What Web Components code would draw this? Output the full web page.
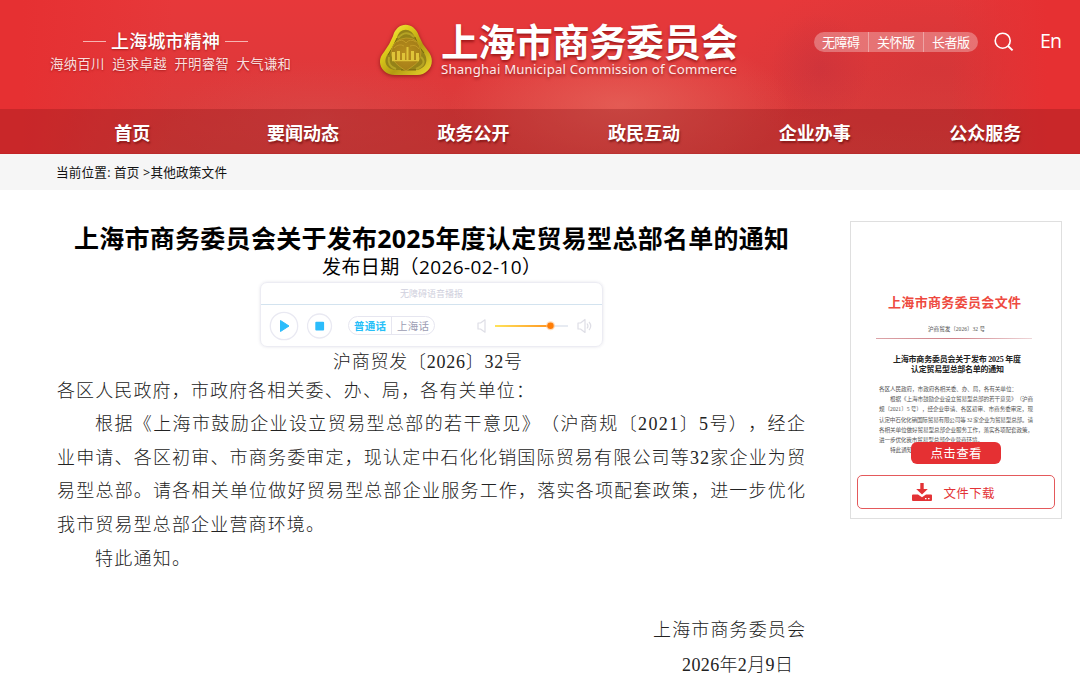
<!DOCTYPE html>
<html lang="zh-CN">
<head>
<meta charset="utf-8">
<title>上海市商务委员会</title>
<style>
html,body{margin:0;padding:0;background:#fff}
body{width:1080px;height:685px;overflow:hidden;font-family:"Open Sans","Noto Sans CJK SC",sans-serif;color:#000;text-spacing-trim:space-all}
</style>
</head>
<body>
<gov-page></gov-page>
<script>
const define=(name,html,setup)=>customElements.define(name,class extends HTMLElement{
  constructor(){super();this.attachShadow({mode:'open'}).innerHTML=html;}
  connectedCallback(){if(setup)setup(this);}
});

/* One line of text, spaced evenly to fill the width given in "w". */
define('fit-text',`<style>:host{display:block;white-space:pre;flex:none}span{display:inline-block;vertical-align:top}</style><span><slot></slot></span>`,el=>{
  const w=+el.getAttribute('w');
  const s=el.shadowRoot.querySelector('span');
  el.style.width=w+'px';
  s.style.letterSpacing='0px';
  const gap=(w-s.getBoundingClientRect().width)/(Array.from(el.textContent).length-1);
  s.style.letterSpacing=gap+'px';
  s.style.marginRight=-gap+'px';
});

define('city-spirit',`<style>
:host{display:block;width:242px;color:#fff;text-shadow:0 1px 2px rgba(110,0,0,.5)}
.t{display:flex;align-items:center;gap:5px;margin-left:33px;font-size:18px;line-height:24px;font-weight:500}
.t i{width:23px;height:1px;background:#f7b5b2;margin-top:1px}
.b{font-size:13.4px;line-height:22px;color:#fbdedd}
</style><div class="t"><i></i><fit-text w="109">上海城市精神</fit-text><i></i></div>
<fit-text class="b" w="241">海纳百川  追求卓越  开明睿智  大气谦和</fit-text>`);

define('site-logo',`<style>
:host{display:flex;gap:8px;align-items:flex-start;color:#fff}
svg{margin-top:1px;filter:drop-shadow(0 1px 2px rgba(90,10,0,.6))}
.n{text-shadow:0 2px 3px rgba(110,0,0,.6)}
.c{font-size:37.5px;line-height:38px;height:39px;font-weight:700}
.e{font-size:13.2px;line-height:14px;color:#fdeaea;font-family:"Noto Sans",sans-serif}
</style>
<svg width="54" height="53" viewBox="0 0 54 53">
<defs><linearGradient id="g" x1="0" y1="0" x2="1" y2="1"><stop offset="0" stop-color="#fff36a"/><stop offset=".3" stop-color="#e0cf1c"/><stop offset=".6" stop-color="#b39a12"/><stop offset="1" stop-color="#eddb2f"/></linearGradient>
<radialGradient id="h"><stop offset="0" stop-color="#b98d1e"/><stop offset="1" stop-color="#a57f18"/></radialGradient></defs>
<path d="M14 12C18-3 35-3 40 12Q43 20 49 27C58 38 50 51 38 51H16C3 51-4 38 5 28Q11 20 14 12Z" fill="url(#g)"/>
<path d="M18 14C20 3 33 3 36 14Q39 22 45 29C51 38 45 46 36 46H18C8 46 3 38 9 30Q15 22 18 14Z" fill="#958218"/>
<path d="M36 13Q38 22 45 29M37 46H22M9 31Q14 24 18 14" fill="none" stroke="#6c590b" stroke-width=".8"/>
<path d="M19 14Q27 5 35 13M10 33Q8 42 17 45M42 33Q49 40 37 45" fill="none" stroke="#b5a324" stroke-width="2"/>
<path d="M12 28Q14 15 27 14T42 28Q42 37 34 42L27 47L20 42Q13 37 12 28Z" fill="url(#h)" stroke="#c2a126" stroke-width=".8"/>
<path d="M18 18Q23 14 27 19Q31 14 37 18M15 24Q20 19 25 22M31 22Q37 20 40 25" fill="none" stroke="#c7a02b" stroke-width=".8"/>
<path d="M13 28h3v8h-3zM18 27h3v9h-3zM23 29h3v7h-3zM27.500 23h2v13h-2zM32 27h3v9h-3zM37 29h3v7h-3zM13 36h27v1.200H13z" fill="#dfc338"/>
</svg>
<div class="n"><fit-text class="c" w="297">上海市商务委员会</fit-text><fit-text class="e" w="296">Shanghai Municipal Commission of Commerce</fit-text></div>`);

define('header-tools',`<style>
:host{display:flex;align-items:center;color:#fff}
.p{display:flex;width:164px;height:20px;border-radius:10px;background:rgba(255,255,255,.3);overflow:hidden}
.p div{flex:1;display:flex;align-items:center;justify-content:center;font-size:13px;line-height:20px}
.p div+div{border-left:1px solid rgba(255,255,255,.35)}
svg{margin-left:16px}
.en{font-size:19.5px;line-height:28px;margin:-3px 0 0 26px}
</style><div class="p"><div><fit-text w="38">无障碍</fit-text></div><div><fit-text w="38">关怀版</fit-text></div><div><fit-text w="38">长者版</fit-text></div></div>
<svg width="20" height="20" viewBox="0 0 20 20" fill="none" stroke="#fff" stroke-width="1.6"><circle cx="8.7" cy="8.7" r="7.5"/><path d="M14 14l4.6 4.4" stroke-width="2"/></svg>
<fit-text class="en" w="22">En</fit-text>`);

define('main-nav',`<style>
:host{display:grid;grid-template-columns:repeat(6,170.6px);padding-left:47px;height:44px;background:rgba(130,16,20,.29);border-bottom:1px solid rgba(160,20,24,.15);color:#fff;font-size:18px;font-weight:700;text-shadow:1px 2px 2px rgba(80,0,0,.5)}
a{display:flex;align-items:center;justify-content:center;line-height:26px;padding-top:3px;box-sizing:border-box}
</style><a><fit-text w="36">首页</fit-text></a><a><fit-text w="72">要闻动态</fit-text></a><a><fit-text w="72">政务公开</fit-text></a><a><fit-text w="72">政民互动</fit-text></a><a><fit-text w="72">企业办事</fit-text></a><a><fit-text w="72">公众服务</fit-text></a>`);

define('site-header',`<style>
:host{display:block;height:154px;background:
linear-gradient(90deg,#e63032 2%,rgba(230,48,50,0) 16%,rgba(230,48,50,0) 88%,#e63032 97%),
radial-gradient(ellipse 50px 55px at 820px 68px,rgba(180,45,62,.3),rgba(180,45,62,0)),
radial-gradient(ellipse 170px 75px at 620px 105px,rgba(236,122,108,.5),rgba(236,122,108,0)),
radial-gradient(ellipse 150px 60px at 320px 118px,rgba(215,90,90,.28),rgba(215,90,90,0)),
radial-gradient(ellipse 200px 110px at 940px 70px,rgba(200,52,54,.45),rgba(200,52,54,0)),
linear-gradient(#e7383a,#e0383a 45%,#d6403d)}
.top{display:flex;height:109px;box-sizing:border-box}
city-spirit{margin:29px 0 0 50px}site-logo{margin:23px 0 0 87px}header-tools{margin:28px 0 0 76px;height:28px}
</style><div class="top"><city-spirit></city-spirit><site-logo></site-logo><header-tools></header-tools></div><main-nav></main-nav>`);

define('bread-crumb',`<style>:host{display:flex;align-items:center;height:36px;padding-left:56px;background:#f6f6f6;font-size:12.6px;line-height:20px;color:#111}fit-text{margin-top:1px}</style><fit-text w="171">当前位置: 首页 &gt;其他政策文件</fit-text>`);

define('voice-player',`<style>
:host{display:block;width:341px;height:63px;border:1px solid #ececf3;border-radius:7px;box-shadow:0 0 3px rgba(100,100,140,.18);font-size:10.5px}
.h{height:21px;display:flex;justify-content:center;align-items:center;color:#cfcfdd;border-bottom:1px solid #d3e3ef;font-size:9px;line-height:18px}
.r{display:flex;align-items:center;height:41px;padding-left:8px}
.pill{display:flex;width:85px;height:17px;border:1px solid #e6e6f0;border-radius:10px;margin-left:15px;line-height:18px}
.pill div{display:flex;justify-content:center;width:42px}
.pill div+div{border-left:1px solid #e6e6f0;color:#9c9db3}.on{color:#27bff8;font-weight:700}
.c{margin-left:8px}.v{margin-left:42px}
</style><div class="h"><fit-text w="63">无障碍语音播报</fit-text></div>
<div class="r"><svg width="30" height="30"><circle cx="15" cy="15" r="13.7" fill="#fff" stroke="#e9e9f2" stroke-width="1.3"/><path d="M11.5 9.5L20 15l-8.500 5.500z" fill="#2bbcfb" stroke="#2bbcfb" stroke-linejoin="round"/></svg>
<svg class="c" width="26" height="26"><circle cx="12.500" cy="13" r="12" fill="#fff" stroke="#e9e9f2" stroke-width="1.300"/><rect x="8.300" y="8.800" width="8.800" height="8.800" rx="1" fill="#2bbcfb"/></svg>
<div class="pill"><div class="on"><fit-text w="32">普通话</fit-text></div><div><fit-text w="32">上海话</fit-text></div></div>
<svg class="v" width="117" height="18" viewBox="0 0 117 18"><defs><linearGradient id="s"><stop stop-color="#ffe35a"/><stop offset="1" stop-color="#ff9420"/></linearGradient></defs>
<g fill="none" stroke="#dedee6" stroke-width="1.200" stroke-linejoin="round"><path d="M1 6h2.500L8 2.800v12.400L3.500 12H1zM101 6h2.500l4.500-3.500v13l-4.500-3.500H101z"/><path d="M110 6.500q2 2.500 0 5M112 5q3.500 4 0 8"/></g>
<path d="M74 9h17" stroke="#e7ebf2" stroke-width="2"/><rect x="18" y="8" width="56" height="2" fill="url(#s)"/><circle cx="73.500" cy="8.700" r="4.500" fill="#ffc58a" opacity=".6"/><circle cx="73.500" cy="8.700" r="3.200" fill="#ff7d05"/></svg></div>`);

define('notice-article',`<style>
:host{display:block;width:750px;margin-left:57px;padding-top:31px;font-size:18px;color:#222;font-family:"Liberation Serif","Noto Sans CJK SC",serif;font-weight:300}
.t,.d{font-family:"Open Sans","Noto Sans CJK SC",sans-serif;color:#000}
.t{font-size:25px;line-height:34px;font-weight:700;margin-left:17px}
.d{font-size:19px;line-height:24px;font-weight:400;margin:0 0 0 265px}
voice-player{margin:3px 0 0 203px;font-family:"Open Sans","Noto Sans CJK SC",sans-serif;font-weight:400}
.l{line-height:33.700px}.n{line-height:28px;margin:1px 0 0 276px}.a{line-height:28px;margin:1px 0 3px}.i{margin-left:38px}
.s{line-height:34px;margin:36px 0 0 596px}.e{line-height:34px;margin:1px 0 0 625px}
</style>
<fit-text class="t" w="715">上海市商务委员会关于发布2025年度认定贸易型总部名单的通知</fit-text>
<fit-text class="d" w="219">发布日期（2026-02-10）</fit-text>
<voice-player></voice-player>
<fit-text class="n" w="189">沪商贸发〔2026〕32号</fit-text>
<fit-text class="a" w="477">各区人民政府，市政府各相关委、办、局，各有关单位：</fit-text>
<fit-text class="l i" w="710">根据《上海市鼓励企业设立贸易型总部的若干意见》（沪商规〔2021〕5号），经企</fit-text>
<fit-text class="l" w="748">业申请、各区初审、市商务委审定，现认定中石化化销国际贸易有限公司等32家企业为贸</fit-text>
<fit-text class="l" w="748">易型总部。请各相关单位做好贸易型总部企业服务工作，落实各项配套政策，进一步优化</fit-text>
<fit-text class="l" w="267">我市贸易型总部企业营商环境。</fit-text>
<fit-text class="l i" w="95">特此通知。</fit-text>
<fit-text class="s" w="152">上海市商务委员会</fit-text>
<fit-text class="e" w="111">2026年2月9日</fit-text>`);

define('doc-preview',`<style>
:host{display:block;position:relative;height:247px;font-family:"Liberation Serif","Noto Sans CJK SC",serif;color:#555;font-size:5.600px}
.r{font-size:13px;line-height:20px;color:#ee4a40;font-weight:700;padding:71px 0 0 37px}
.n{line-height:10px;margin:11px 0 0 77px}
hr{border:0;height:1px;width:156px;margin:4px 0 0 25px;background:linear-gradient(90deg,#dca4a8,#cf8088 50%,#eed6d8)}
.h{font-size:8px;line-height:10px;color:#222;font-weight:700;padding-left:42px}
.h1{margin-top:16px}.h2{padding-left:60px}
.l{line-height:10.200px;margin-left:28px}.f{margin-top:9px}.i{margin-left:39px}
a{position:absolute;left:60px;top:220px;width:90px;height:22px;border-radius:6px;background:#e53033;color:#fff;display:flex;align-items:center;justify-content:center;font:400 12.500px/22px "Open Sans","Noto Sans CJK SC",sans-serif}
a fit-text{margin-top:1px}
</style>
<fit-text class="r" w="133">上海市商务委员会文件</fit-text>
<fit-text class="n" w="57">沪商贸发〔2026〕32 号</fit-text><hr>
<fit-text class="h h1" w="128">上海市商务委员会关于发布 2025 年度</fit-text>
<fit-text class="h h2" w="93">认定贸易型总部名单的通知</fit-text>
<fit-text class="l f" w="138">各区人民政府，市政府各相关委、办、局，各有关单位：</fit-text>
<fit-text class="l i" w="143">根据《上海市鼓励企业设立贸易型总部的若干意见》（沪商</fit-text>
<fit-text class="l" w="154">规〔2021〕5 号），经企业申请、各区初审、市商务委审定，现</fit-text>
<fit-text class="l" w="154">认定中石化化销国际贸易有限公司等 32 家企业为贸易型总部。请</fit-text>
<fit-text class="l" w="154">各相关单位做好贸易型总部企业服务工作，落实各项配套政策，</fit-text>
<fit-text class="l" w="104">进一步优化我市贸易型总部企业营商环境。</fit-text>
<fit-text class="l i" w="28">特此通知。</fit-text>
<a><fit-text w="51">点击查看</fit-text></a>`);

define('doc-card',`<style>
:host{display:block;width:210px;height:296px;border:1px solid #dfdfdf;background:#fff}
.b{display:flex;align-items:center;justify-content:center;gap:12px;width:190px;padding-right:6px;height:32px;margin:6px 0 0 6px;border:1px solid #e4595b;border-radius:5px;color:#e33336;font-size:12.500px;line-height:22px}
.b fit-text{margin-top:3px}
</style><doc-preview></doc-preview><div class="b"><svg width="20" height="18" viewBox="0 0 20 18" fill="#e33336"><path d="M8.300 0h3.400v6h4.100L10 11.500 4.200 6h4.100z"/><path fill-rule="evenodd" d="M0 12.500q0-1 1-1h5l4 2.800 4-2.800h5q1 0 1 1V17q0 1-1 1H1q-1 0-1-1zM13 15v1.300h1.500V15zM16 15v1.300h1.500V15z"/></svg><fit-text w="51">文件下载</fit-text></div>`);

define('gov-page',`<style>:host{display:block}main{display:flex}doc-card{margin:31px 0 0 43px}</style>
<site-header></site-header><bread-crumb></bread-crumb><main><notice-article></notice-article><doc-card></doc-card></main>`);
</script>
</body>
</html>
